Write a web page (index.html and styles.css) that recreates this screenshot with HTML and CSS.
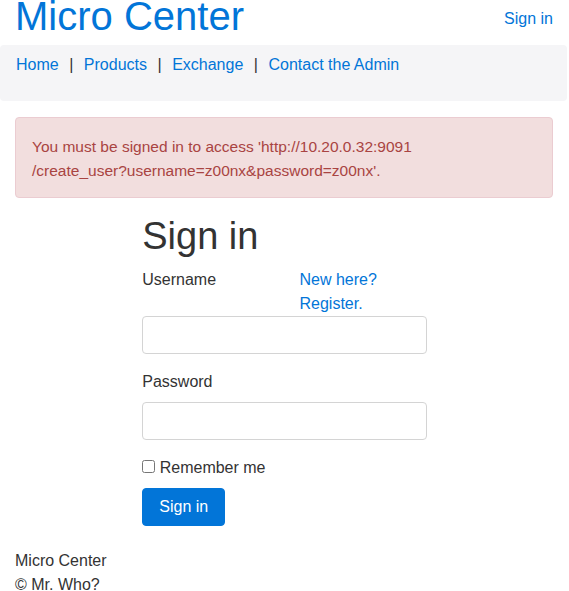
FILE: index.html
```html
<!DOCTYPE html>
<html lang="en">
<head>
<meta charset="utf-8">
<title>Sign in - Micro Center</title>
<link rel="stylesheet" href="styles.css">
</head>
<body>
<header class="site-header">
  <h1 class="brand"><a href="#">Micro Center</a></h1>
  <a class="header-signin" href="#">Sign in</a>
</header>
<nav class="navbar">
  <ul class="nav-list">
    <li><a href="#">Home</a></li>
    <li class="sep">|</li>
    <li><a href="#">Products</a></li>
    <li class="sep">|</li>
    <li><a href="#">Exchange</a></li>
    <li class="sep">|</li>
    <li><a href="#">Contact the Admin</a></li>
  </ul>
</nav>
<main>
  <div class="flash-wrap">
    <div class="alert">You must be signed in to access 'http://10.20.0.32:9091<br>/create_user?username=z00nx&amp;password=z00nx'.</div>
  </div>
  <section class="signin">
    <h1 class="signin-title">Sign in</h1>
    <form class="signin-form">
      <div class="label-row">
        <label for="username">Username</label>
        <a href="#">New here? Register.</a>
      </div>
      <input class="field" id="username" type="text">
      <div class="group">
        <label class="field-label" for="password">Password</label>
        <input class="field" id="password" type="password">
      </div>
      <div class="group">
        <label class="check"><input type="checkbox" class="checkbox"> Remember me</label>
      </div>
      <button class="btn" type="button">Sign in</button>
    </form>
  </section>
</main>
<footer class="site-footer">
  <div>Micro Center</div>
  <div>&copy; Mr. Who?</div>
</footer>
</body>
</html>
```
FILE: styles.css
```css
html, body {
  margin: 0;
  padding: 0;
}
body {
  font-family: "Liberation Sans", Arial, sans-serif;
  font-size: 16px;
  line-height: 24px;
  color: #333;
  background: #fff;
}
a {
  color: #0275d8;
  text-decoration: none;
}
.site-header {
  display: flex;
  justify-content: space-between;
  align-items: flex-start;
  margin-top: -8px;
  padding: 0 16px 0 15px;
}
.brand {
  margin: 0;
  font-size: 40px;
  line-height: 48px;
  font-weight: 400;
}
.header-signin {
  margin-top: 15px;
}
.navbar {
  margin: 5px 2px 0 0;
  background: #f5f5f7;
  border-radius: 4px;
  padding: 8px 16px;
}
.nav-list {
  list-style: none;
  margin: 0 0 16px;
  padding: 0;
  display: flex;
}
.nav-list .sep {
  margin: 0 10.5px;
  color: #333;
}
.flash-wrap {
  padding: 0 16px 0 15px;
  margin-top: 16px;
}
.alert {
  background: #f2dede;
  border: 1px solid #ebccd1;
  color: #a94442;
  border-radius: 4px;
  font-size: 15.5px;
  padding: 17px 16px 14px;
}
.signin {
  width: 50%;
  margin-left: 25%;
}
.signin-title {
  margin: 16px 0 8px;
  font-size: 38px;
  line-height: 1.2;
  font-weight: 400;
  color: #333;
}
.label-row {
  display: grid;
  grid-template-columns: 1fr 1fr;
  column-gap: 30px;
}
.field {
  display: block;
  width: 100%;
  box-sizing: border-box;
  height: 38px;
  border: 1px solid #d4d4d4;
  border-radius: 4px;
  padding: 6px 12px;
  font: inherit;
  margin: 0;
}
.group {
  margin-top: 16px;
}
.field-label {
  display: block;
  margin-bottom: 8px;
}
.checkbox {
  margin: 0;
  width: 13px;
  height: 13px;
}
.btn {
  margin-top: 8px;
  display: block;
  background: #0275d8;
  color: #fff;
  border: 1px solid #0275d8;
  border-radius: 4px;
  padding: 6px 16px;
  font: inherit;
  line-height: 24px;
}
.site-footer {
  margin-top: 23px;
  padding: 0 15px;
}
```
